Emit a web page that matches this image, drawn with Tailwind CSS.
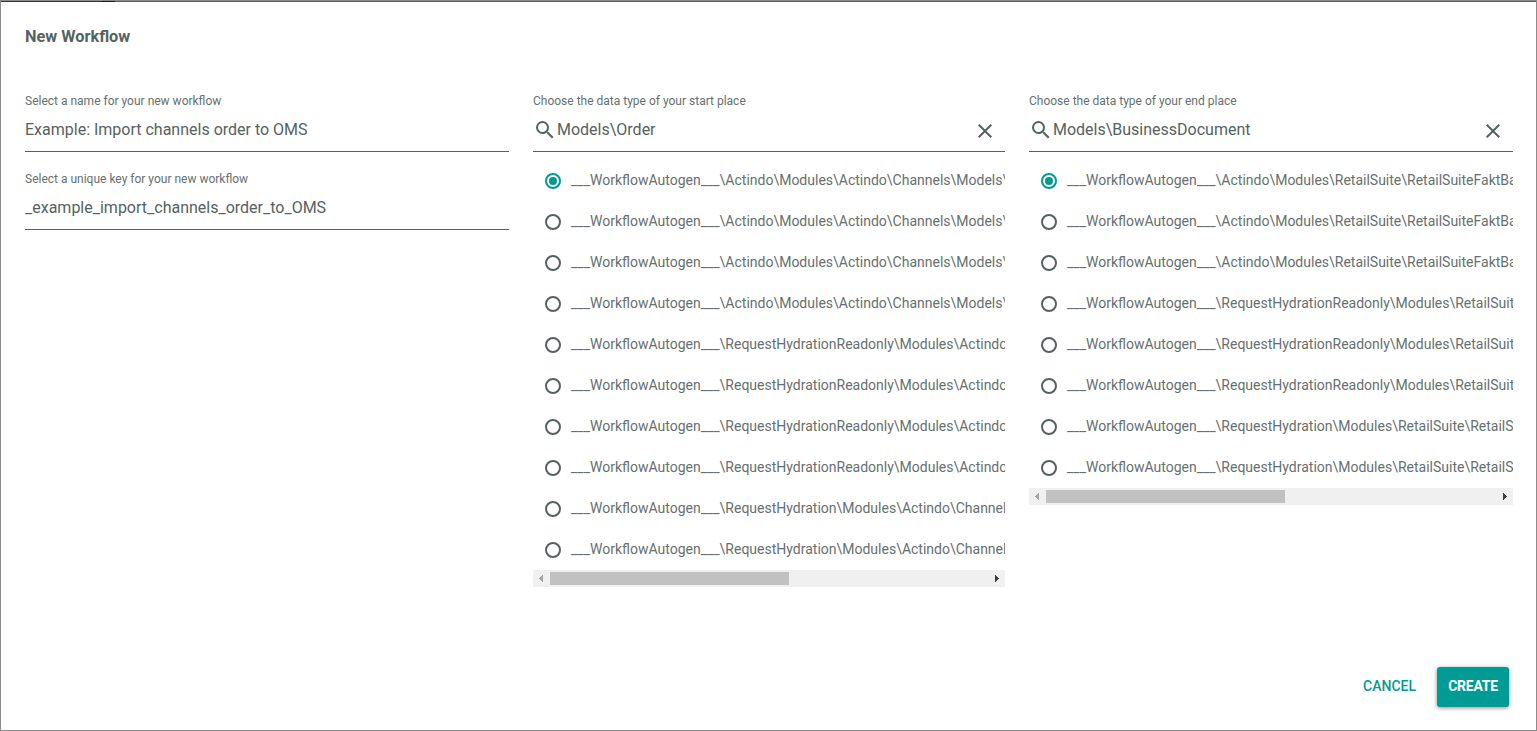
<!DOCTYPE html>
<html lang="en">
<head>
<meta charset="utf-8">
<title>New Workflow</title>
<script src="https://cdn.jsdelivr.net/npm/@tailwindcss/browser@4"></script>
</head>
<body class="bg-white font-['Roboto',sans-serif] text-[#556262]">
<div class="relative flex h-[731px] w-[1537px] flex-col overflow-hidden border border-[#8c8c8c] px-6">
  <div class="absolute inset-x-0 top-0 flex h-px"><div class="w-[101px] bg-[#3a3638]"></div><div class="w-[13px] bg-[#1c1a1b]"></div><div class="flex-1 bg-[#5c5a5b]"></div></div>
  <h1 class="mt-6 text-[16.3px] leading-6 font-bold">New Workflow</h1>
  <main class="mt-[31px] grid grid-cols-[484px_472px_484px] gap-6">
    <section>
      <label class="block h-[72px] border-b border-[#556262] pt-[11px]"><span class="block h-5 text-xs leading-5 text-[#667070]">Select a name for your new workflow</span><span class="mt-[7px] block text-base leading-6">Example: Import channels order to OMS</span></label>
      <label class="block h-[78px] border-b border-[#556262] pt-[17px]"><span class="block h-5 text-xs leading-5 text-[#667070]">Select a unique key for your new workflow</span><span class="mt-[7px] block text-base leading-6">_example_import_channels_order_to_OMS</span></label>
    </section>
    <section id="start"></section>
    <section id="end"></section>
  </main>
  <footer class="mt-auto mb-[23px] flex justify-end gap-[10px] pr-[3px] text-sm font-medium">
    <button class="h-10 px-[11px] pb-[2px] leading-[38px] text-[#009b95]">CANCEL</button>
    <button class="h-10 w-[72px] rounded-[3px] bg-[#009b95] pb-[2px] leading-[38px] font-bold tracking-[-0.25px] text-white shadow-[0_1px_4px_rgba(0,0,0,0.45)]">CREATE</button>
  </footer>
</div>
<script>
const W = '___WorkflowAutogen___\\';
const channels = W + 'Actindo\\Modules\\Actindo\\Channels\\Models\\Order';
const readonlyOrder = W + 'RequestHydrationReadonly\\Modules\\Actindo\\Channels\\Models\\Order';
const order = W + 'RequestHydration\\Modules\\Actindo\\Channels\\Models\\Order';
const fakt = W + 'Actindo\\Modules\\RetailSuite\\RetailSuiteFaktBase\\Models\\BusinessDocument';
const readonlyDoc = W + 'RequestHydrationReadonly\\Modules\\RetailSuite\\RetailSuiteFaktBase';
const doc = W + 'RequestHydration\\Modules\\RetailSuite\\RetailSuiteFaktBase';

function picker(id, label, value, items) {
  const rows = items.map((t, i) => `
    <div class="flex h-[41px] items-center pl-3 whitespace-nowrap">
      <span class="mt-px mr-[10px] flex size-4 shrink-0 items-center justify-center rounded-full border-2 ${i ? 'border-[#556262]' : 'border-[#009b95]'}">${i ? '' : '<span class="size-2 rounded-full bg-[#009b95]"></span>'}</span>
      <span class="mb-[2px] text-sm leading-5 text-[#667070]">${t}</span>
    </div>`).join('');
  document.getElementById(id).innerHTML = `
    <div class="h-[72px] border-b border-[#556262] pt-[11px]">
      <div class="h-5 text-xs leading-5 text-[#667070]">${label}</div>
      <div class="mt-[7px] flex h-6 items-center pr-2">
        <svg class="size-6 shrink-0" viewBox="0 0 24 24" fill="#556262"><path d="M15.5 14h-.79l-.28-.27A6.471 6.471 0 0 0 16 9.5 6.5 6.5 0 1 0 9.5 16c1.61 0 3.09-.59 4.23-1.57l.27.28v.79l5 4.99L20.49 19l-4.99-5zm-6 0C7.01 14 5 11.99 5 9.5S7.01 5 9.5 5 14 7.01 14 9.5 11.99 14 9.5 14z"/></svg>
        <span class="flex-1 text-base leading-6">${value}</span>
        <svg class="mt-px size-6 shrink-0" viewBox="0 0 24 24" fill="#556262"><path d="M19 6.41 17.59 5 12 10.59 6.41 5 5 6.41 10.59 12 5 17.59 6.41 19 12 13.41 17.59 19 19 17.59 13.41 12z"/></svg>
      </div>
    </div>
    <div class="mt-2 overflow-hidden">${rows}</div>
    <div class="flex h-[17px] items-center bg-[#f0f0f0]">
      <svg class="h-[17px] w-[17px]" viewBox="0 0 17 17" fill="#a3a3a3" shape-rendering="crispEdges"><path d="M10 5v7H9v-1H8v-1H7V9H6V8h1V7h1V6h1V5z"/></svg>
      <div class="h-[13px] w-[239px] bg-[#c1c1c1]"></div>
      <svg class="ml-auto h-[17px] w-[17px]" viewBox="0 0 17 17" fill="#404040" shape-rendering="crispEdges"><path d="M7 5v7h1v-1h1v-1h1V9h1V8h-1V7H9V6H8V5z"/></svg>
    </div>`;
}
picker('start', 'Choose the data type of your start place', 'Models\\Order',
  [...Array(4).fill(channels), ...Array(4).fill(readonlyOrder), ...Array(2).fill(order)]);
picker('end', 'Choose the data type of your end place', 'Models\\BusinessDocument',
  [...Array(3).fill(fakt), ...Array(3).fill(readonlyDoc), ...Array(2).fill(doc)]);
</script>
</body>
</html>
